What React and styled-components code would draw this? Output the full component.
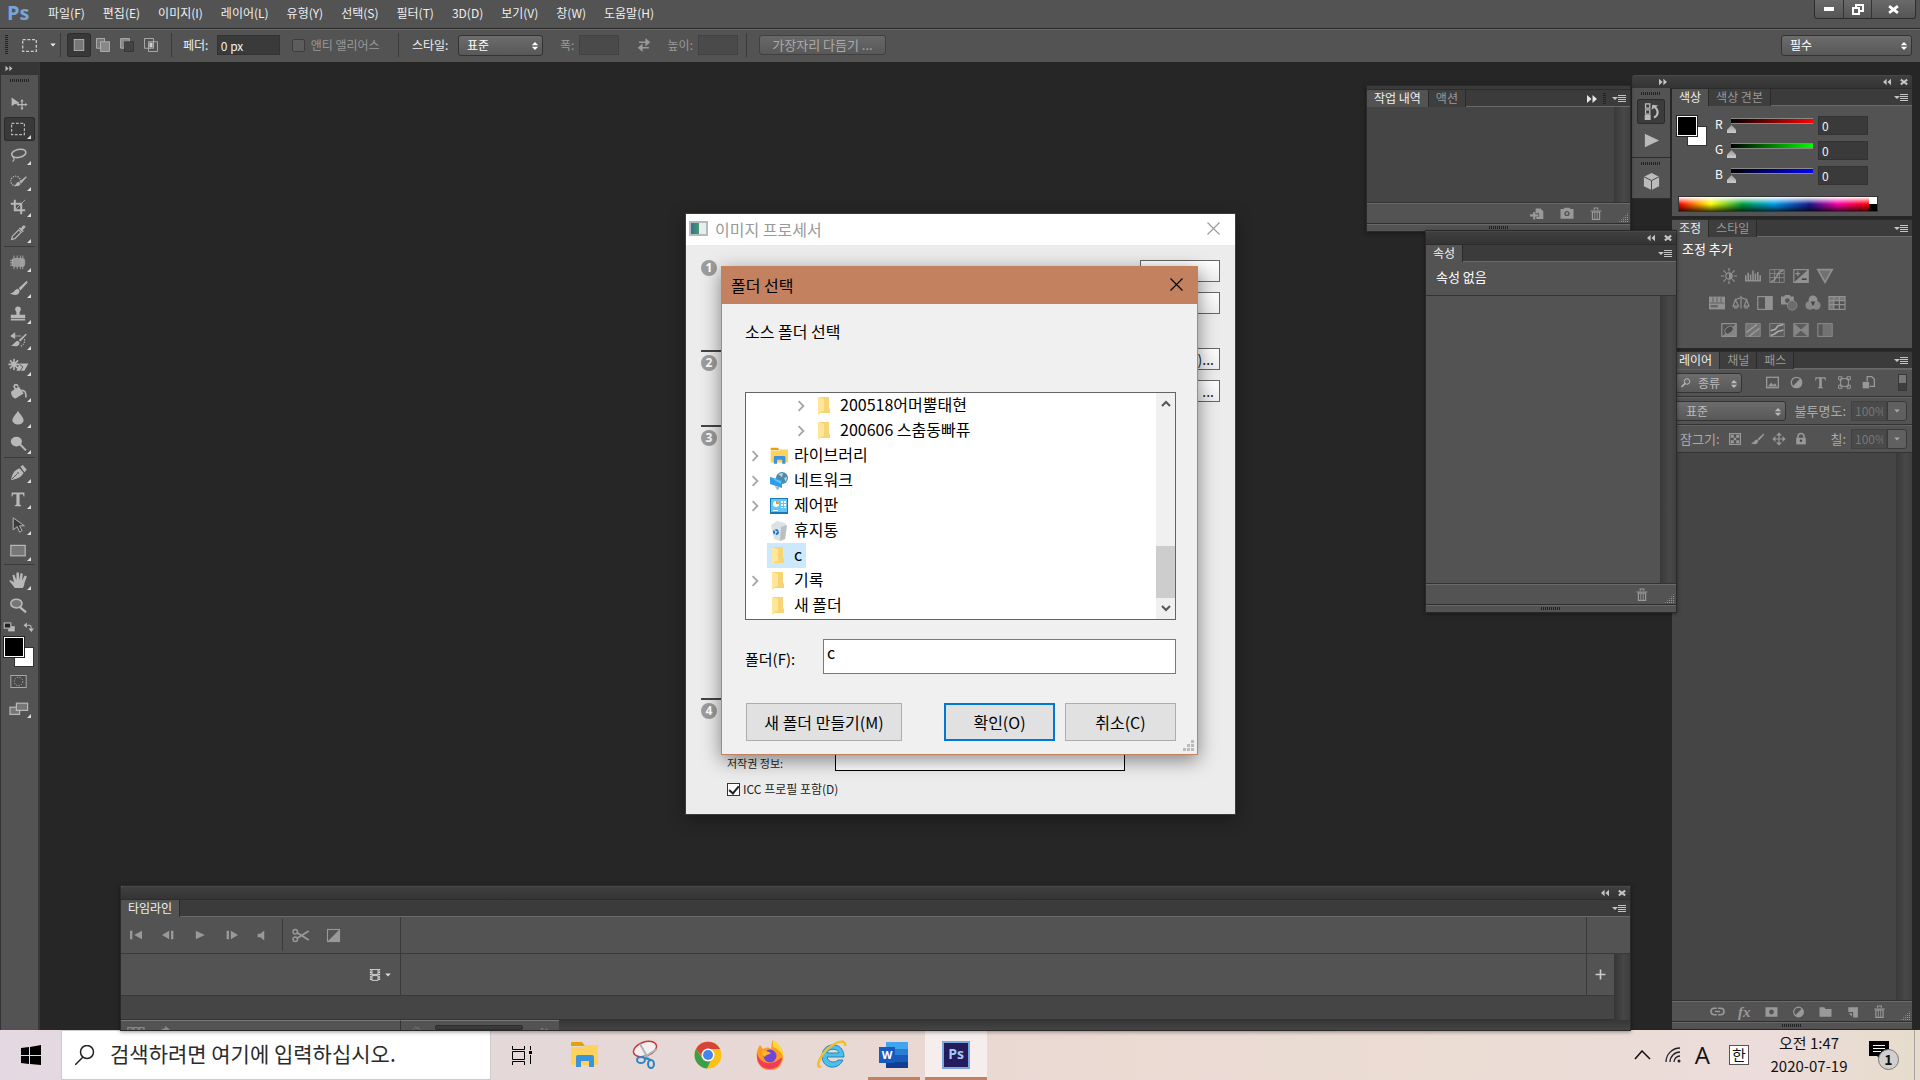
import React from 'react';
import styled, { createGlobalStyle, css } from 'styled-components';

const GlobalStyle = createGlobalStyle`
  * {
    box-sizing: border-box;
  }

  body {
    margin: 0;
    overflow: hidden;
    background: #262626;
    font-family: "Noto Sans CJK KR", "Noto Sans", sans-serif;
    font-size: 12px;
    line-height: 16px;
    color: #e6e6e6;
  }

  button, input, select {
    font: inherit;
    color: inherit;
    margin: 0;
    padding: 0;
    border: 0;
    border-radius: 0;
    background: none;
  }

  svg {
    display: block;
    flex: none;
  }
`;

/* ---------- icons ---------- */

const line = { fill: 'none', stroke: 'currentColor', strokeWidth: 1.5 };

const shapes = {
  move: <><path d="M2 3v11l3-2 7-2z" fill="currentColor" /><path d="M15 7v10M10 12h10" {...line} /><path d="M15 5l2 3h-4zM15 19l2-3h-4zM8 12l3-2v4zM22 12l-3-2v4z" fill="currentColor" /></>,
  marquee: <rect x="2" y="3" width="16" height="14" {...line} strokeDasharray="3.5 2" />,
  lasso: <><ellipse cx="11" cy="8" rx="9" ry="5" transform="rotate(-12 11 8)" {...line} strokeWidth="2" /><path d="M4 11c-2 2 2 3 1 5s-1 2-2 2" {...line} /></>,
  quick: <><circle cx="7" cy="10" r="6" {...line} strokeDasharray="1.5 1.5" /><path d="M20 4l-8 7 2 2 7-8zM11 11c-3 0-3 4-6 5 4 1 8 0 8-3z" fill="currentColor" /></>,
  crop: <><path d="M6 1v13h13M1 6h13v13" {...line} strokeWidth="2.5" /><path d="M7 13L19 1" {...line} strokeWidth="1" /></>,
  dropper: <><path d="M2 18l1-4 8-8 3 3-8 8z" {...line} /><path d="M11 4l5 5 1-1-1-2 3-3c1-2-1-3-3-2l-2 3-2-1z" fill="currentColor" /></>,
  heal: <><rect x="2" y="5" width="17" height="11" rx="4" fill="currentColor" opacity=".7" /><path d="M5 2v17M9 2v17M13 2v17M16 2v17M0 8h21M0 11h21M0 14h21" stroke="currentColor" strokeWidth="1" strokeDasharray="4 9" /></>,
  brush: <path d="M21 1l-10 9 2 3 9-10zM10 11c-4 0-4 5-10 6 6 3 12 2 12-4z" fill="currentColor" />,
  stamp: <><circle cx="10" cy="4" r="3.500" fill="currentColor" /><path d="M8 6h4v5h7v4H1v-4h7zM1 16h18v2H1z" fill="currentColor" /></>,
  history: <><path d="M2 5h12M1 5l5-4v7z" stroke="currentColor" fill="currentColor" /><path d="M20 2l-9 8 2 2 8-9zM10 11c-3 0-4 4-9 6 6 2 11 1 11-4z" fill="currentColor" /><path d="M18 9c1 4-1 7-5 9" {...line} strokeDasharray="1.5 1.5" /></>,
  eraser: <><path d="M5 1v14M-2 8h14M0 3l10 10M10 3L0 13" stroke="currentColor" strokeWidth="2" /><path d="M12 7h11l-5 9H8z" fill="currentColor" /><path d="M12 8l4 3-3 5" stroke="#444" fill="none" /></>,
  bucket: <><path d="M2 9l9-6 6 9-10 6c-4 0-7-7-5-9z" fill="currentColor" /><path d="M8 9L5 3c1-3 4-3 5 0M14 8c5 0 6 2 6 9" {...line} strokeWidth="2" /></>,
  drop: <path d="M10 1c2 4 7 8 7 12a7 5 0 01-14 0c0-4 5-8 7-12z" fill="currentColor" />,
  dodge: <><ellipse cx="8" cy="7" rx="7" ry="6" fill="currentColor" /><path d="M12 10l8 8" stroke="currentColor" strokeWidth="2.500" /></>,
  pen: <><path d="M1 19C3 12 4 7 12 4l5 6c-4 7-9 7-16 9zM13 2l3-2 5 6-3 3z" fill="currentColor" /><path d="M2 18l7-7" stroke="#444" /><circle cx="10" cy="10" r="1" fill="#444" /></>,
  type: <path d="M2 2h16v5h-1l-1-3h-4v13l2 1v1H6v-1l2-1V4H4L3 7H2z" fill="currentColor" />,
  path: <path d="M4 1v15l5-4 3 7 3-2-3-6h6z" fill="#3a3a3a" stroke="currentColor" strokeWidth="1.200" />,
  rect: <rect x="1" y="3" width="18" height="13" fill="#777" stroke="currentColor" strokeWidth="1.500" />,
  hand: <path d="M6 20c-2-3-5-6-7-9 1-2 4 0 6 2L3 4c1-1 3-1 3 1l2 5V1c1-1 3-1 3 0l1 9 1-8c1-1 3 0 3 1l-1 8 3-6c1-1 3 0 3 1l-3 8c0 3-1 4-2 6z" fill="currentColor" />,
  zoom: <><ellipse cx="8" cy="7" rx="7" ry="5.500" fill="#777" stroke="currentColor" strokeWidth="2" /><path d="M12 11l8 7" stroke="currentColor" strokeWidth="3" /></>,
  defaults: <><rect x="8" y="8" width="10" height="8" fill="#bbb" /><rect x="2" y="3" width="10" height="8" fill="#222" stroke="#aaa" strokeWidth="2" /></>,
  swap: <><path d="M6 6h6q3 0 3 7" {...line} strokeWidth="2" /><path d="M1 6l6-5v10zM10 12h10l-5 6z" fill="currentColor" /></>,
  mask: <><rect x="1" y="3" width="18" height="14" fill="#4a4a4a" stroke="currentColor" /><circle cx="10" cy="10" r="5" fill="none" stroke="currentColor" strokeDasharray="1.5 1.5" /></>,
  screens: <><rect x="0" y="9" width="12" height="9" fill="#777" stroke="currentColor" strokeWidth="1.500" /><rect x="8" y="4" width="14" height="9" fill="#777" stroke="currentColor" strokeWidth="1.500" /></>,
  selNew: <rect x="4" y="3" width="12" height="14" fill="#777" stroke="#bbb" />,
  selAdd: <><rect x="2" y="2" width="10" height="12" fill="#777" stroke="#bbb" /><rect x="7" y="6" width="11" height="12" fill="#888" stroke="#bbb" /></>,
  selSub: <><path d="M2 14V2h11v4H7v8z" fill="#888" stroke="#bbb" /><rect x="7" y="6" width="11" height="12" fill="#444" stroke="#333" /></>,
  selCross: <><rect x="2" y="2" width="11" height="12" fill="none" stroke="#bbb" /><rect x="7" y="6" width="11" height="12" fill="none" stroke="#bbb" /><rect x="8" y="7" width="4" height="6" fill="#ccc" /></>,
  arrows: <><path d="M3 6h11M17 14H6" {...line} strokeWidth="2" /><path d="M12 0l7 6-7 6zM8 8l-7 6 7 6z" fill="currentColor" /></>,
  play: <path d="M3 3l15 7-15 7z" fill="currentColor" />,
  historyPanel: <><path d="M3 1h5v5H3zM3 8h5v5H3z" {...line} /><path d="M2 14h7v6H2z" fill="currentColor" /><path d="M13 17c6-3 5-9 1-12" {...line} strokeWidth="2.500" /><path d="M10 8l1-6 7 1z" fill="currentColor" /></>,
  cube: <><path d="M10 1l8 4v10l-8 4-8-4V5z" fill="currentColor" /><path d="M2 5l8 4 8-4M10 9v10" stroke="#444" fill="none" /></>,
  sun: <><circle cx="10" cy="10" r="4" {...line} /><path d="M10 6a4 4 0 010 8z" fill="currentColor" /><path d="M10 0v4M10 16v4M0 10h4M16 10h4M3 3l3 3M14 14l3 3M17 3l-3 3M6 14l-3 3" {...line} /></>,
  levels: <path d="M1 17V9M4 17V6M7 17V8M10 17V3M13 17V7M16 17V5M19 17V9M0 16h20" {...line} strokeWidth="2" />,
  curves: <><path d="M1 2h18v16H1zM7 2v16M13 2v16M1 7h18M1 12h18" {...line} strokeWidth="1" /><path d="M2 17c9 0 6-13 16-14" {...line} strokeWidth="2" /></>,
  exposure: <><rect x="1" y="2" width="18" height="16" {...line} /><path d="M19 2v16H1z" fill="currentColor" /><path d="M3 7h6M6 4v6" {...line} /><path d="M11 14h6" stroke="#444" strokeWidth="2" /></>,
  vibrance: <path d="M1 2h18l-9 16z" fill="#717171" stroke="currentColor" strokeWidth="2" />,
  hue: <><path d="M0 2h20v16H0z" fill="currentColor" /><path d="M5 3v6M10 3v6M15 3v6M1 10h18" stroke="#535353" /><path d="M2 14h9" stroke="#666" strokeWidth="3" /></>,
  balance: <path d="M10 1v16M3 6l7-3 7 3M3 6l-3 8h7zM17 6l-3 8h6zM1 16h5M14 16h5" {...line} />,
  bw: <><rect x="1" y="2" width="18" height="16" {...line} /><path d="M10 2h9v16h-9z" fill="currentColor" /></>,
  photo: <><path d="M0 2h4l1-2h6l1 2h4v10H0z" fill="currentColor" /><circle cx="8" cy="7" r="3" fill="#555" /><circle cx="14" cy="13" r="6" fill="#6c6c6c" stroke="currentColor" /></>,
  mixer: <><circle cx="10" cy="6" r="5.500" fill="currentColor" /><circle cx="6" cy="13" r="5.500" fill="currentColor" opacity=".85" /><circle cx="14" cy="13" r="5.500" fill="currentColor" opacity=".85" /><path d="M7 8h6l-3 6z" fill="#444" /></>,
  lookup: <><rect x="0" y="2" width="20" height="16" {...line} /><path d="M0 2h6v16H0zM6 2h14v5H6z" fill="currentColor" opacity=".6" /><path d="M6 2v16M13 2v16M0 7h20M0 12h20" {...line} /></>,
  invert: <><rect x="1" y="2" width="18" height="16" {...line} /><path d="M19 2v16H1z" fill="currentColor" opacity=".8" /><ellipse cx="10" cy="10" rx="6" ry="4" transform="rotate(-40 10 10)" fill="#4b4b4b" stroke="currentColor" /></>,
  poster: <><rect x="1" y="2" width="18" height="16" fill="#737373" stroke="currentColor" /><path d="M2 13L15 3M5 18L18 8" stroke="#999" strokeWidth="2" /></>,
  threshold: <><rect x="1" y="2" width="18" height="16" fill="#5c5c5c" stroke="currentColor" /><path d="M2 11l6-2 3-4 7-2M2 17l5-2 4-3 7-2" stroke="#aaa" strokeWidth="2" fill="none" /></>,
  selective: <><rect x="1" y="2" width="18" height="16" fill="#5c5c5c" stroke="currentColor" /><path d="M1 2l9 8 9-8M1 18l9-8 9 8" stroke="currentColor" fill="none" /><path d="M1 2l9 8-9 8zM19 2l-9 8 9 8z" fill="#858585" /></>,
  gradientMap: <><rect x="1" y="2" width="18" height="16" fill="#727272" stroke="currentColor" /><path d="M2 3h5v14H2z" fill="#565656" /></>,
  search: <><circle cx="12" cy="7" r="5.500" {...line} strokeWidth="2" /><path d="M8 11l-7 7" {...line} strokeWidth="3" /></>,
  image: <><rect x="1" y="2" width="18" height="16" {...line} strokeWidth="2" /><path d="M3 16l5-6 3 4 3-3 3 5z" fill="currentColor" /></>,
  adjust: <><circle cx="10" cy="10" r="8" {...line} strokeWidth="2" /><path d="M4 16L16 4a8 8 0 01-12 12z" fill="currentColor" /></>,
  shape: <><path d="M4 4h12v12H4z" {...line} /><path d="M1 1h5v5H1zM14 1h5v5h-5zM1 14h5v5H1zM14 14h5v5h-5z" {...line} /></>,
  smart: <><path d="M8 8V1h7l4 4v11h-7" {...line} strokeWidth="2" /><path d="M1 9h10v10H1z" fill="currentColor" /></>,
  checker: <><rect x="1" y="1" width="18" height="18" {...line} strokeWidth="2" /><path d="M3 3h5v5H3zM12 3h5v5h-5zM8 8h4v4H8zM3 12h5v5H3zM12 12h5v5h-5z" fill="currentColor" /></>,
  cross: <><path d="M10 3v14M3 10h14" {...line} strokeWidth="2" /><path d="M10-1l5 5H5zM10 21l5-5H5zM-1 10l5-5v10zM21 10l-5-5v10z" fill="currentColor" /></>,
  lock: <><path d="M2 8h16v11H2z" fill="currentColor" /><path d="M5 9V6a5 5 0 0110 0v3" {...line} strokeWidth="2.500" /><circle cx="10" cy="13" r="2" fill="#444" /></>,
  link: <path d="M9 5H5a5 5 0 000 10h4M11 5h4a5 5 0 010 10h-4M6 10h8" {...line} strokeWidth="2.500" />,
  maskAdd: <path fillRule="evenodd" d="M0 2h20v16H0zM10 6a4 4 0 100 8 4 4 0 000-8z" fill="currentColor" />,
  folder: <path d="M0 2h8l2 3h10v13H0z" fill="currentColor" />,
  newLayer: <path d="M3 2h16v17H11v-9H3zM4 12h5v6z" fill="currentColor" />,
  trash: <><path d="M7 3V0h6v3M1 5h18" {...line} strokeWidth="2" /><path d="M4 7h12v12H4z" {...line} strokeWidth="2" /><path d="M8 8v10M12 8v10" {...line} /></>,
  newDoc: <><path d="M8 2h7l4 4v11H9v-3h4V9H8z" fill="currentColor" /><path d="M6 7v11M0 12h12" stroke="currentColor" strokeWidth="3" /></>,
  camera: <path fillRule="evenodd" d="M0 3h5l1-2h8l1 2h5v15H0zM10 6a4 4 0 100 8 4 4 0 000-8zM10 8a2 2 0 110 4 2 2 0 010-4z" fill="currentColor" />,
  first: <path d="M0 3h4v14H0zM20 3v14L7 10z" fill="currentColor" />,
  prev: <path d="M0 10l12-7v14zM15 3h4v14h-4z" fill="currentColor" />,
  next: <path d="M1 3h4v14H1zM8 3l12 7-12 7z" fill="currentColor" />,
  sound: <path d="M3 7h5l7-6v18l-7-6H3z" fill="currentColor" />,
  scissors: <><circle cx="3" cy="5" r="3" {...line} strokeWidth="2" /><circle cx="3" cy="15" r="3" {...line} strokeWidth="2" /><path d="M5 6l16 10M5 14L21 4" {...line} strokeWidth="2.500" /></>,
  transition: <><rect x="2" y="2" width="16" height="16" {...line} /><path d="M18 2v16H2z" fill="currentColor" /></>,
  film: <><path d="M3 0v20M17 0v20" {...line} strokeWidth="3" strokeDasharray="2.500 1.500" /><path d="M5 1h10v8H5zM5 11h10v8H5z" {...line} /></>,
  plus: <path d="M10 1v18M1 10h18" {...line} strokeWidth="3" />,
  frames: <path d="M1 3h5v8H1zM8 3h5v8H8zM15 3h5v8h-5z" {...line} />,
  share: <path d="M11 1l8 7-8 6v-4c-5 0-7 3-9 7 0-8 4-12 9-12z" fill="currentColor" />,
  mountain: <path d="M0 15L7 5l4 6 3-5 6 9" {...line} />,
  close: <path d="M2 2l16 16M18 2L2 18" stroke="currentColor" fill="none" strokeWidth="1.500" />,
  closeBold: <path d="M2 4l16 12M18 4L2 16" stroke="currentColor" strokeWidth="5" />,
  rewind: <path d="M9 2v16L0 10zM20 2v16l-9-8z" fill="currentColor" />,
  forward: <path d="M0 2l9 8-9 8zM11 2l9 8-9 8z" fill="currentColor" />,
  caret: <path d="M1 5h18l-9 10z" fill="currentColor" />,
  updown: <path d="M10 0l8 8H2zM10 20l8-8H2z" fill="currentColor" />,
  chevron: <path d="M6 2l8 8-8 8" {...line} strokeWidth="3" />,
  chevronUp: <path d="M2 14l8-8 8 8" {...line} strokeWidth="4" />,
  chevronDown: <path d="M2 6l8 8 8-8" {...line} strokeWidth="4" />,
};

const Icon = ({ name, w = 18, h = w }) => (
  <svg width={w} height={h} viewBox="0 0 20 20" overflow="visible" aria-hidden="true">
    {shapes[name]}
  </svg>
);

const MenuGlyph = () => (
  <svg width="14" height="10" viewBox="0 0 14 10" aria-hidden="true">
    <path d="M0 3h6L3 6zM6 1h8v1H6zM6 3h8v1H6zM6 5h8v1H6zM6 7h8v1H6z" fill="#c4c4c4" />
  </svg>
);

/* ---------- shared parts ---------- */

const Screen = styled.div`
  display: flex;
  flex-direction: column;
  height: 100vh;
`;

const Row = styled.div`
  display: flex;
  align-items: ${p => p.$align || 'center'};
  gap: ${p => p.$gap || 0}px;
`;

const Spacer = styled.div`
  flex: 1;
`;

const Grip = styled.div`
  width: 20px;
  height: ${p => p.$h || 3}px;
  background: repeating-linear-gradient(90deg, #222 0 1px, transparent 1px 2px);
`;

const CornerGrip = styled.div`
  width: 10px;
  height: 10px;
  align-self: flex-end;
  background: conic-gradient(#999 25%, transparent 0) 0 0 / 2px 2px;
  clip-path: polygon(100% 0, 100% 100%, 0 100%);
`;

const IconButton = styled.button`
  display: flex;
  align-items: center;
  justify-content: center;
  width: ${p => p.$w || 24}px;
  height: ${p => p.$h || 20}px;
  color: ${p => p.$color || '#999'};
`;

/* ---------- menu bar ---------- */

const MenuBar = styled.header`
  display: flex;
  flex: none;
  height: 29px;
  padding-left: 7px;
  background: #535353;
  border-bottom: 1px solid #282828;
`;

const Logo = styled.div`
  width: 31px;
  color: #77a5d8;
  font: bold 20px/25px "Open Sans", sans-serif;
`;

const Menus = styled.nav`
  display: flex;
  gap: 18px;
  padding: 5px 0 0 10px;
`;

const MenuItem = styled.button`
  height: 16px;
  color: #f0f0f0;
  white-space: nowrap;
`;

const WindowButtons = styled.div`
  display: flex;
  height: 19px;
  margin-right: 4px;
  border: 1px solid #2d2d2d;
  border-top: 0;
  border-radius: 0 0 3px 3px;
  background: linear-gradient(#6a6a6a, #555);

  button {
    display: flex;
    align-items: center;
    justify-content: center;
    width: 28px;
    color: #fff;
  }

  button + button {
    border-left: 1px solid #333;
  }

  button:last-child {
    width: 44px;
  }
`;

const menuNames = ['파일(F)', '편집(E)', '이미지(I)', '레이어(L)', '유형(Y)', '선택(S)', '필터(T)', '3D(D)', '보기(V)', '창(W)', '도움말(H)'];

/* ---------- options bar ---------- */

const OptionsBar = styled.div`
  display: flex;
  flex: none;
  align-items: center;
  height: 33px;
  padding: 0 8px 2px 5px;
  background: #535353;
  border-top: 1px solid #6a6a6a;
`;

const OptionGroup = styled.div`
  display: flex;
  align-items: center;
  gap: ${p => p.$gap}px;
  width: ${p => p.$w}px;
  height: 24px;
  padding-left: ${p => p.$pad || 0}px;
  padding-right: ${p => p.$end || 0}px;
  border-right: 1px solid #3a3a3a;
  white-space: nowrap;
  color: ${p => (p.$dim ? '#999' : '#eee')};
`;

const SideGrip = styled.div`
  width: 3px;
  height: ${p => p.$h || 20}px;
  background: repeating-linear-gradient(#222 0 1px, transparent 1px 2px);
`;

const ModeButton = styled.button`
  display: flex;
  align-items: center;
  justify-content: center;
  width: 22px;
  height: 22px;
  border-radius: 2px;
  color: #bbb;
  ${p => p.$on && css`
    background: #383838;
    box-shadow: 0 0 0 1px #2d2d2d;
  `}
`;

const Field = styled.input`
  width: ${p => p.$w}px;
  height: ${p => p.$h || 20}px;
  padding: 0 3px;
  border: 1px solid #333;
  background: #3a3a3a;
  color: #f2f2f2;

  &:disabled {
    background: #4a4a4a;
    border-color: #424242;
    color: #777;
  }
`;

const DarkCheck = styled.input`
  appearance: none;
  width: 13px;
  height: 13px;
  border: 1px solid #3c3c3c;
  border-radius: 2px;
  background: #5d5d5d;
`;

const SelectBox = styled.div`
  position: relative;
  width: ${p => p.$w}px;
  color: ${p => (p.$dim ? '#bbb' : '#fff')};

  select {
    appearance: none;
    width: 100%;
    height: ${p => p.$h || 21}px;
    padding-left: ${p => p.$pad || 8}px;
    border: 1px solid #333;
    border-radius: 3px;
    background: linear-gradient(#6c6c6c, #585858);
    line-height: 16px;
  }

  svg {
    position: absolute;
    right: 4px;
    top: 6px;
    pointer-events: none;
  }

  svg:nth-of-type(2) {
    right: auto;
    left: 6px;
    top: 5px;
  }
`;

const Select = ({ label, value, glass, ...rest }) => (
  <SelectBox {...rest}>
    <select aria-label={label} defaultValue={value}>
      <option>{value}</option>
    </select>
    <Icon name="updown" w={8} h={10} />
    {glass && <Icon name="search" w={10} />}
  </SelectBox>
);

const RefineButton = styled.button`
  width: 127px;
  height: 20px;
  margin-left: 12px;
  border: 1px solid #404040;
  border-radius: 3px;
  background: linear-gradient(#686868, #585858);
  color: #aaa;
  font-size: 13px;
  line-height: 16px;
`;

/* ---------- work area ---------- */

const Workspace = styled.main`
  position: relative;
  display: flex;
  flex: 1;
  min-height: 0;
  background: #262626;
`;

const Toolbox = styled.aside`
  display: flex;
  flex-direction: column;
  align-items: center;
  width: 40px;
  background: #535353;
  border-left: 1px solid #333;
  border-right: 2px solid #383838;
`;

const ToolHead = styled.div`
  align-self: stretch;
  height: 13px;
  padding: 3px 4px;
  margin-bottom: 4px;
  background: #363636;
  color: #bbb;
`;

const ToolGroups = styled.div`
  display: flex;
  flex-direction: column;
  gap: 2px;
  padding: 8px 0 1px;
`;

const ToolGroup = styled.div`
  display: flex;
  flex-direction: column;
  gap: 2px;
  padding: 1px 0;
  border-bottom: ${p => (p.$last ? 0 : 1)}px solid #3a3a3a;
`;

const Tool = styled.button`
  position: relative;
  display: flex;
  align-items: center;
  justify-content: center;
  width: 31px;
  height: 24px;
  padding-right: 3px;
  color: #b8b8b8;
  border-radius: 3px;
  ${p => p.$on && css`
    background: #393939;
    box-shadow: inset 0 0 0 1px #2b2b2b;
  `}

  &::after {
    content: "";
    position: absolute;
    right: 4px;
    bottom: 2px;
    border: 2px solid transparent;
    border-right-color: #ddd;
    border-bottom-color: #ddd;
    display: ${p => (p.$flat ? 'none' : 'block')};
  }
`;

const Swatches = styled.div`
  display: grid;
  grid-template: repeat(3, 10px) / repeat(3, 10px);

  i {
    border: 1px solid #333;
    background: #fff;
    grid-area: 2 / 2 / 4 / 4;
  }

  b {
    z-index: 1;
    grid-area: 1 / 1 / 3 / 3;
    background: #000;
    border: 1px solid #fff;
    outline: 1px solid #222;
  }
`;

const SwatchGap = styled.div`
  padding: 3px 2px 2px 0;
`;

const ToolSpace = styled.div`
  height: 3px;
`;

const toolGroups = [
  ['move', 'marquee', 'lasso', 'quick', 'crop', 'dropper'],
  ['heal', 'brush', 'stamp', 'history', 'eraser', 'bucket', 'drop', 'dodge'],
  ['pen', 'type', 'path', 'rect'],
  ['hand', 'zoom'],
];

const Toolbar = () => (
  <Toolbox>
    <ToolHead><Icon name="forward" w={8} h={7} /></ToolHead>
    <Grip />
    <ToolGroups>
      {toolGroups.map((group, i) => (
        <ToolGroup key={i} $last={i === 3}>
          {group.map(name => (
            <Tool key={name} aria-label={name} $on={name === 'marquee'} $flat={name === 'move' || name === 'zoom'}>
              <Icon name={name} w={16} />
            </Tool>
          ))}
        </ToolGroup>
      ))}
    </ToolGroups>
    <Row $gap={4}>
      <IconButton $w={14} $h={14} aria-label="defaults"><Icon name="defaults" w={13} /></IconButton>
      <IconButton $w={16} $h={14} $color="#bbb" aria-label="swap"><Icon name="swap" w={11} /></IconButton>
    </Row>
    <SwatchGap><Swatches><b /><i /></Swatches></SwatchGap>
    <Tool $flat aria-label="quick mask"><Icon name="mask" w={17} /></Tool>
    <ToolSpace />
    <Tool aria-label="screen mode"><Icon name="screens" w={16} /></Tool>
  </Toolbox>
);

/* ---------- panels ---------- */

const Floating = styled.section`
  position: absolute;
  display: flex;
  flex-direction: column;
  background: #535353;
  box-shadow: 0 0 0 1px #2a2a2a, 0 1px 4px 1px rgba(0, 0, 0, 0.4);
`;

const HistoryWindow = styled(Floating)`
  top: 24px;
  right: 290px;
  width: 263px;
`;

const PropertiesWindow = styled(Floating)`
  top: 169px;
  right: 244px;
  width: 250px;
  z-index: 2;
`;

const TimelineWindow = styled(Floating)`
  left: 121px;
  right: 290px;
  bottom: 0;
`;

const HeadBar = styled.div`
  display: flex;
  align-items: center;
  gap: 9px;
  height: 13px;
  padding: 0 4px;
  background: linear-gradient(#3f3f3f, #343434);
  border-top: 1px solid #484848;
  border-radius: 3px 3px 0 0;
  color: #c4c4c4;
`;

const TabBar = styled.div`
  display: flex;
  align-items: center;
  gap: 6px;
  height: 18px;
  padding-right: 4px;
  background: #3b3b3b;
  border-top: 1px solid #2c2c2c;
  box-shadow: inset 0 -1px #6a6a6a;
`;

const Tabs = styled.div`
  display: flex;
  height: 17px;
`;

const Tab = styled.button`
  height: 17px;
  padding: 0 7px 2px;
  line-height: 14px;
  white-space: nowrap;
  color: ${p => (p.$on ? '#f0f0f0' : '#999')};
  background: ${p => (p.$on ? '#535353' : '#3e3e3e')};
  border-right: 1px solid #2a2a2a;
`;

const TabStrip = ({ names, collapse }) => (
  <TabBar>
    <Tabs role="tablist">
      {names.map((name, i) => (
        <Tab key={name} $on={i === 0} role="tab" aria-selected={i === 0}>{name}</Tab>
      ))}
    </Tabs>
    <Spacer />
    {collapse && <Icon name="forward" w={10} />}
    {collapse && <SideGrip $h={12} />}
    <MenuGlyph />
  </TabBar>
);

const WindowHead = () => (
  <HeadBar>
    <Spacer />
    <Icon name="rewind" w={8} />
    <Icon name="closeBold" w={8} />
  </HeadBar>
);

const Well = styled.div`
  display: flex;
  flex: ${p => (p.$h ? 'none' : 1)};
  height: ${p => (p.$h ? `${p.$h}px` : 'auto')};
  justify-content: flex-end;
  background: ${p => p.$bg || '#454545'};

  &::after {
    content: "";
    width: 16px;
    background: linear-gradient(90deg, #393939, #484848 60%, #404040);
  }
`;

const PanelFoot = styled.div`
  display: flex;
  align-items: center;
  justify-content: flex-end;
  gap: ${p => p.$gap || 16}px;
  height: 20px;
  padding: 0 2px;
  border-top: 1px solid #6a6a6a;
  box-shadow: 0 -1px #333;
  color: #999;
  background: #535353;
`;

const BottomStrip = styled.div`
  display: flex;
  align-items: center;
  justify-content: center;
  height: 8px;
  background: #535353;
  border-top: 1px solid #2e2e2e;
  box-shadow: inset 0 1px #686868;
`;

const TopStrip = styled.div`
  height: 3px;
  background: #3b3b3b;
`;

const Message = styled.div`
  height: 34px;
  padding: 7px 10px;
  border-bottom: 1px solid #333;
  color: #fff;
  font-size: 13px;
`;

/* ---------- right dock ---------- */

const Dock = styled.aside`
  display: flex;
  flex-direction: column;
  width: 280px;
  margin: 13px 8px 1px 0;
`;

const DockHead = styled(HeadBar)`
  padding-left: 27px;
`;

const DockColumns = styled.div`
  display: flex;
  flex: 1;
  align-items: flex-start;
  gap: 2px;
  min-height: 0;
`;

const IconColumn = styled.div`
  width: 38px;
  background: #535353;

  > div {
    display: flex;
    flex-direction: column;
    align-items: center;
    gap: 4px;
    padding: 4px 0;
    border-bottom: 1px solid #2d2d2d;
  }
`;

const DockButton = styled.button`
  display: flex;
  align-items: center;
  justify-content: center;
  width: 28px;
  height: 25px;
  border-radius: 3px;
  color: #bbb;
  ${p => p.$on && css`
    background: #3c3c3c;
    box-shadow: inset 0 0 0 1px #2b2b2b;
  `}
`;

const Panels = styled.div`
  display: flex;
  flex: 1;
  flex-direction: column;
  align-self: stretch;
  gap: 3px;
`;

const Panel = styled.section`
  display: flex;
  flex-direction: column;
  flex: ${p => (p.$grow ? 1 : 'none')};
  background: #535353;
`;

const ColorBody = styled.div`
  display: flex;
  gap: 8px;
  padding: 10px 0 0 5px;
`;

const Channels = styled.div`
  display: flex;
  flex-direction: column;
  gap: 5px;
`;

const Channel = styled.label`
  display: flex;
  height: 20px;

  span {
    width: 13px;
    line-height: 15px;
    color: #fff;
  }

  input:last-child {
    height: 19px;
    margin-left: 2px;
    padding-bottom: 1px;
  }
`;

const ColorRange = styled.input`
  appearance: none;
  width: 88px;
  height: 20px;
  padding: 0 2px;

  &::-webkit-slider-runnable-track {
    height: 20px;
    margin: 0 1px;
    background: linear-gradient(#888, #888) 0 2px / 100% 1px no-repeat,
      linear-gradient(#888, #888) 0 7px / 100% 1px no-repeat,
      linear-gradient(90deg, #000, ${p => p.$c}) 0 2px / 100% 6px no-repeat;
  }

  &::-webkit-slider-thumb {
    appearance: none;
    width: 9px;
    height: 8px;
    margin: 9px 0 0 -4px;
    background: linear-gradient(#999, #ccc);
    clip-path: polygon(50% 0, 100% 60%, 100% 100%, 0 100%, 0 60%);
  }
`;

const Spectrum = styled.div`
  display: flex;
  justify-content: flex-end;
  width: 200px;
  height: 16px;
  margin: 10px 0 4px 6px;
  border: 1px solid #333;
  background: linear-gradient(#fff, transparent 50%, #000 120%),
    linear-gradient(90deg, #f00, #ff0 16%, #00a040 32%, #00a0f0 48%, #1a1a90 66%, #f0a 80%, #f00 96%);

  &::after {
    content: "";
    width: 8px;
    background: linear-gradient(#fff 50%, #000 50%);
  }
`;

const AdjustBody = styled.div`
  display: flex;
  flex-direction: column;
  height: 111px;
  padding: 4px 0 0 10px;
  color: #fff;
  font-size: 13px;
`;

const AdjustGrid = styled.div`
  display: flex;
  flex-direction: column;
  align-items: center;
  width: 190px;
  padding-top: 9px;
  gap: 7px;
  color: #919191;
`;

const LayerRow = styled.div`
  display: flex;
  align-items: center;
  height: 28px;
  padding: 0 5px 0 ${p => p.$pad || 3}px;
  border-bottom: 1px solid #333;
  box-shadow: inset 0 1px #626262;
  color: #aaa;
  white-space: nowrap;

  label, span {
    font-size: 13px;
  }
`;

const Toggle = styled.button`
  width: 9px;
  height: 17px;
  background: linear-gradient(#777 50%, #3e3e3e 50%);
  border: 1px solid #383838;
`;

const LockIcons = styled.div`
  display: flex;
  margin-left: 4px;
`;

const Percent = styled.div`
  display: flex;
  margin-left: 5px;

  button {
    display: flex;
    align-items: center;
    justify-content: center;
    width: 20px;
    height: 20px;
    border: 1px solid #3a3a3a;
    border-radius: 0 3px 3px 0;
    background: #606060;
  }
`;

const Opacity = ({ label }) => (
  <>
    <label htmlFor={label}>{label}:</label>
    <Percent>
      <Field id={label} $w={36} disabled defaultValue="100%" />
      <button aria-label={`${label} 목록`}><Icon name="caret" w={6} /></button>
    </Percent>
  </>
);

const adjustRows = [
  ['sun', 'levels', 'curves', 'exposure', 'vibrance'],
  ['hue', 'balance', 'bw', 'photo', 'mixer', 'lookup'],
  ['invert', 'poster', 'threshold', 'selective', 'gradientMap'],
];

const channels = [['R', '#f00'], ['G', '#0f0'], ['B', '#00f']];

const Fx = styled.span`
  width: 13px;
  font: italic bold 15px/16px "Liberation Serif", serif;
`;

const RightDock = () => (
  <Dock>
    <DockHead>
      <Icon name="forward" w={8} />
      <Spacer />
      <Icon name="rewind" w={8} />
      <Icon name="closeBold" w={8} />
    </DockHead>
    <DockColumns>
      <IconColumn>
        <div>
          <Grip />
          <DockButton $on aria-label="작업 내역"><Icon name="historyPanel" w={17} /></DockButton>
          <DockButton aria-label="액션"><Icon name="play" w={19} /></DockButton>
        </div>
        <div>
          <Grip />
          <DockButton aria-label="3D"><Icon name="cube" w={19} /></DockButton>
        </div>
      </IconColumn>
      <Panels>
        <Panel>
          <TabStrip names={['색상', '색상 견본']} />
          <ColorBody>
            <Swatches><b /><i /></Swatches>
            <Channels>
              {channels.map(([name, color]) => (
                <Channel key={name}>
                  <span>{name}</span>
                  <ColorRange type="range" min="0" max="255" defaultValue="0" $c={color} aria-label={name} />
                  <Field $w={50} defaultValue="0" aria-label={`${name} 값`} />
                </Channel>
              ))}
            </Channels>
          </ColorBody>
          <Spectrum />
        </Panel>
        <Panel>
          <TabStrip names={['조정', '스타일']} />
          <AdjustBody>
            조정 추가
            <AdjustGrid>
              {adjustRows.map((icons, i) => (
                <Row key={i}>
                  {icons.map(name => (
                    <IconButton key={name} $color="#919191" aria-label={name}><Icon name={name} w={16} /></IconButton>
                  ))}
                </Row>
              ))}
            </AdjustGrid>
          </AdjustBody>
        </Panel>
        <Panel $grow>
          <TabStrip names={['레이어', '채널', '패스']} />
          <LayerRow>
            <Select label="종류" value="종류" $w={67} $h={20} $pad={22} $dim glass />
            <Spacer />
            {['image', 'adjust', 'type', 'shape', 'smart'].map(name => (
              <IconButton key={name} aria-label={name}><Icon name={name} w={13} /></IconButton>
            ))}
            <Spacer />
            <Toggle aria-label="필터링" />
          </LayerRow>
          <LayerRow>
            <Select label="혼합 모드" value="표준" $w={111} $h={20} $pad={10} $dim />
            <Spacer />
            <Opacity label="불투명도" />
          </LayerRow>
          <LayerRow $pad={8}>
            <span>잠그기:</span>
            <LockIcons>
              {['checker', 'brush', 'cross', 'lock'].map(name => (
                <IconButton key={name} $w={22} aria-label={name}><Icon name={name} w={12} /></IconButton>
              ))}
            </LockIcons>
            <Spacer />
            <Opacity label="칠" />
          </LayerRow>
          <Well />
          <PanelFoot $gap={14}>
            <Icon name="link" w={13} />
            <Fx>fx</Fx>
            {['maskAdd', 'adjust', 'folder', 'newLayer', 'trash'].map(name => <Icon key={name} name={name} w={13} h={12} />)}
            <CornerGrip />
          </PanelFoot>
          <BottomStrip><Grip /></BottomStrip>
        </Panel>
      </Panels>
    </DockColumns>
  </Dock>
);

/* ---------- timeline ---------- */

const Track = styled.div`
  display: grid;
  grid-template-columns: 279px 1fr ${p => p.$right || '44px'};
  height: ${p => p.$h}px;
  border-bottom: 1px solid #393939;
  background: #535353;

  > div {
    display: flex;
    align-items: center;
  }

  > div + div {
    border-left: 1px solid #393939;
  }
`;

const Controls = styled.div`
  gap: 8px;
  padding-left: 3px;
`;

const Rule = styled.div`
  width: 1px;
  height: 32px;
  margin-left: 4px;
  background: #3a3a3a;
`;

const TimeRows = styled.div`
  flex: 1;
`;

const ClipCell = styled.div`
  justify-content: flex-end;
  gap: 4px;
  padding-right: 9px;
  color: #ddd;
`;

const AddCell = styled.div`
  justify-content: center;
  color: #ccc;
`;

const EmptyTrack = styled.div`
  height: 24px;
  background: #454545;
  border-bottom: 1px solid #333;
`;

const Cut = styled.div`
  display: flex;
  height: 10px;
  overflow: hidden;
  background: linear-gradient(#363636, #444);
  color: #888;

  > div {
    display: flex;
    flex: none;
    gap: 14px;
    padding: 4px 6px 0;
    background: #535353;
    border-top: 1px solid #777;
    width: 279px;
  }

  > div + div {
    width: 159px;
    gap: 15px;
    border-left: 1px solid #333;
    padding-left: 12px;
  }
`;

const ZoomTrack = styled.span`
  width: 88px;
  height: 5px;
  border: 1px solid #2d2d2d;
  border-radius: 2px;
  background: #3a3a3a;
`;

const TimeScroll = styled.div`
  width: 16px;
  background: linear-gradient(90deg, #363636, #464646 60%, #3e3e3e);
`;

const Timeline = () => (
  <TimelineWindow>
    <WindowHead />
    <TabStrip names={['타임라인']} />
    <Track $h={37}>
      <Controls>
        {['first', 'prev', 'play', 'next'].map(name => (
          <IconButton key={name} aria-label={name}><Icon name={name} w={12} /></IconButton>
        ))}
        <IconButton $w={18} aria-label="sound"><Icon name="sound" w={11} /></IconButton>
        <Rule />
        <IconButton $w={18} aria-label="분할"><Icon name="scissors" w={15} /></IconButton>
        <IconButton $w={32} aria-label="전환"><Icon name="transition" w={15} /></IconButton>
      </Controls>
      <div />
      <div />
    </Track>
    <Row $align="stretch">
      <TimeRows>
        <Track $h={42} $right="28px">
          <ClipCell><Icon name="film" w={12} /><Icon name="caret" w={6} /></ClipCell>
          <div />
          <AddCell><Icon name="plus" w={11} /></AddCell>
        </Track>
        <EmptyTrack />
      </TimeRows>
      <TimeScroll />
    </Row>
    <Cut>
      <div><Icon name="frames" w={17} /><Icon name="share" w={13} /></div>
      <div><Icon name="mountain" w={7} /><ZoomTrack /><Icon name="mountain" w={12} /></div>
    </Cut>
  </TimelineWindow>
);

/* ---------- image processor ---------- */

const Processor = styled.section`
  position: absolute;
  top: 152px;
  left: 50%;
  width: 549px;
  margin-left: -274px;
  background: #ececec;
  color: #222;
  box-shadow: 0 0 0 1px #3c3c3c, 0 4px 16px rgba(0, 0, 0, 0.4);
`;

const ProcessorTitle = styled.div`
  display: flex;
  align-items: center;
  gap: 7px;
  height: 31px;
  padding: 0 15px 2px 3px;
  background: #fff;
  color: #999;
  font-size: 16px;
`;

const AppGlyph = styled.div`
  width: 19px;
  height: 15px;
  border: 2px solid #b4bcc0;
  background: linear-gradient(90deg, #3c6f90, #3f9a70 50%, #e8eef0 50%);
`;

const Step = styled.div`
  display: flex;
  justify-content: space-between;
  height: ${p => p.$h}px;
  margin: 0 15px;
  padding-top: ${p => (p.$first ? 15 : 0)}px;
`;

const StepSide = styled.div`
  display: flex;
  width: 430px;
  margin-top: 2px;
  padding-top: 3px;
  border-top: 2px solid #444;
`;

const StepNumber = styled.span`
  flex: none;
  width: 16px;
  height: 16px;
  border-radius: 8px;
  background: #9c9c9c;
  color: #fff;
  text-align: center;
  font: bold 12px/16px "Open Sans", sans-serif;
`;

const StepButtons = styled.div`
  display: flex;
  flex-direction: column;
  gap: 10px;

  button {
    width: 80px;
    height: 22px;
    padding-right: 5px;
    border: 1px solid #666;
    background: linear-gradient(#fff, #eee);
    text-align: right;
    font-size: 14px;
    line-height: 16px;
  }
`;

const StepFour = styled.div`
  flex: 1;
  padding: 42px 0 0 10px;
`;

const Copyright = styled.label`
  display: flex;
  align-items: flex-end;
  justify-content: space-between;
  width: 398px;
  height: 26px;
  font-size: 11px;
  line-height: 16px;

  input {
    width: 290px;
    height: 26px;
    border: 1px solid #000;
    background: #fff;
  }
`;

const IccLabel = styled.label`
  display: flex;
  align-items: center;
  gap: 3px;
  margin-top: 10px;

  input {
    appearance: none;
    display: grid;
    place-items: center;
    width: 13px;
    height: 13px;
    border: 1px solid #333;
    background: #fff;
  }

  input:checked::after {
    content: "";
    width: 4px;
    height: 8px;
    margin-bottom: 2px;
    border: solid #222;
    border-width: 0 2px 2px 0;
    transform: rotate(40deg);
  }
`;

const ImageProcessor = () => (
  <Processor role="dialog" aria-label="이미지 프로세서">
    <ProcessorTitle>
      <AppGlyph />
      이미지 프로세서
      <Spacer />
      <IconButton $w={13} aria-label="닫기"><Icon name="close" w={15} /></IconButton>
    </ProcessorTitle>
    <Step $first $h={103}>
      <StepNumber>1</StepNumber>
      <StepButtons><button aria-label="열기" /><button aria-label="찾기" /></StepButtons>
    </Step>
    <Step $h={75}>
      <StepSide><StepNumber>2</StepNumber></StepSide>
      <StepButtons><button>)...</button><button>...</button></StepButtons>
    </Step>
    <Step $h={273}>
      <StepSide><StepNumber>3</StepNumber></StepSide>
    </Step>
    <Step $h={118}>
      <StepSide>
        <StepNumber>4</StepNumber>
        <StepFour>
          <Copyright>저작권 정보:<input type="text" /></Copyright>
          <IccLabel><input type="checkbox" defaultChecked />ICC 프로필 포함(D)</IccLabel>
        </StepFour>
      </StepSide>
    </Step>
  </Processor>
);

/* ---------- folder dialog ---------- */

const Dialog = styled.section`
  position: absolute;
  z-index: 3;
  top: 204px;
  left: 50%;
  width: 477px;
  margin-left: -239px;
  border: 1px solid #c38160;
  background: #f0f0f0;
  color: #000;
  font-size: 16px;
  line-height: 20px;
  box-shadow: 0 5px 18px rgba(0, 0, 0, 0.45);
`;

const DialogTitle = styled.div`
  display: flex;
  align-items: center;
  justify-content: space-between;
  height: 37px;
  padding: 0 14px 2px 9px;
  background: #c38160;
`;

const DialogBody = styled.div`
  padding: 17px 21px 13px 23px;
`;

const Tree = styled.div`
  display: flex;
  height: 228px;
  margin-top: 51px;
  border: 1px solid #646464;
  background: #fff;
`;

const TreeRows = styled.ul`
  flex: 1;
  margin: 0;
  padding: 0;
  list-style: none;
`;

const TreeRow = styled.li`
  display: flex;
  align-items: center;
  height: 25px;
  padding-left: ${p => (p.$deep ? 49 : 3)}px;
`;

const Expander = styled.span`
  display: flex;
  justify-content: center;
  width: 12px;
  margin-right: 6px;
  color: #a6a6a6;
`;

const TreeLabel = styled.span`
  display: flex;
  align-items: center;
  gap: 6px;
  height: 25px;
  padding: 0 4px 0 3px;
  background: ${p => (p.$on ? '#cce8ff' : 'transparent')};

  span {
    padding-bottom: 3px;
  }
`;

const ScrollBar = styled.div`
  display: flex;
  flex-direction: column;
  align-items: center;
  width: 19px;
  padding: 6px 0;
  background: #f0f0f0;
  color: #555;
`;

const Thumb = styled.div`
  width: 19px;
  height: 52px;
  margin: auto 0 5px;
  background: #cdcdcd;
`;

const FolderField = styled.label`
  display: flex;
  align-items: center;
  justify-content: space-between;
  margin-top: 19px;

  span {
    padding-top: 4px;
    font-size: 15px;
  }

  input {
    width: 353px;
    height: 35px;
    padding: 0 3px 9px;
    border: 1px solid #7a7a7a;
    background: #fff;
  }
`;

const DialogButtons = styled.div`
  display: flex;
  gap: 10px;
  margin-top: 29px;
  padding-left: 1px;
`;

const DialogButton = styled.button`
  width: ${p => p.$w || 111}px;
  height: 38px;
  margin-right: ${p => (p.$w ? 'auto' : 0)};
  border: ${p => (p.$primary ? '2px solid #0078d7' : '1px solid #adadad')};
  background: #e1e1e1;
`;

const GripCorner = styled.div`
  position: absolute;
  right: 3px;
  bottom: 3px;
`;

const DialogGrip = () => (
  <GripCorner>
    <svg width="11" height="11" viewBox="0 0 11 11">
      <path d="M8 0h3v3H8zM4 4h3v3H4zM8 4h3v3H8zM0 8h3v3H0zM4 8h3v3H4zM8 8h3v3H8z" fill="#bbb" />
    </svg>
  </GripCorner>
);

const FolderIcon = () => (
  <svg width="18" height="18" viewBox="0 0 18 18">
    <path d="M3 0h10v11l1 1v4H3z" fill="#f7d474" />
    <path d="M2 0l6 2v12l-4 1v3l-2-1z" fill="#ffe69b" />
  </svg>
);

const LibraryIcon = ({ w = 18 }) => (
  <svg width={w} height={w} viewBox="0 0 28 28">
    <path d="M1 3c0-2 1-2 2-2h9l3 4H1z" fill="#e3a008" />
    <path d="M1 6h13l2-2h12v20H1z" fill="#ffd25e" />
    <path d="M6 26V16q0-2 2-2h14q2 0 2 2v10h-5v-6h-8v6z" fill="#3a93db" />
  </svg>
);

const NetworkIcon = () => (
  <svg width="18" height="20" viewBox="0 0 18 20">
    <circle cx="12" cy="7" r="6" fill="#4f8aa8" />
    <path d="M8 3l5-1-1 4zM14 7l3-1-1 5z" fill="#b4dbe6" />
    <path d="M0 6l12 3v8L0 13z" fill="#2d9cea" />
    <path d="M1 7l10 3v3z" fill="#64c4ff" />
    <path d="M5 15l4 1v2l-2 1z" fill="#a9bac5" />
  </svg>
);

const ControlIcon = () => (
  <svg width="18" height="16" viewBox="0 0 18 16">
    <path d="M0 0h18v16H0z" fill="#1378bd" />
    <path d="M1 1h16v13H1z" fill="#63c6f8" />
    <circle cx="6" cy="6" r="3" fill="#fff" />
    <path d="M6 3v3h3a3 3 0 00-3-3z" fill="#e5a020" />
    <path d="M11 3h2v2h-2zM14 3h2v2h-2zM11 6h2v2h-2zM14 6h2v2h-2zM11 9h2v1h-2zM14 9h2v1h-2zM3 12h5v1H3z" fill="#fff" />
  </svg>
);

const BinIcon = () => (
  <svg width="18" height="20" viewBox="0 0 18 20">
    <path d="M1 4l6-4 8 2 2 3-2 13-5 2-6-2z" fill="#dde1e4" />
    <path d="M11 6l6-2-2 14-5 2z" fill="#b9c0c4" />
    <circle cx="6" cy="11" r="2" fill="none" stroke="#1979ca" strokeWidth="2" strokeDasharray="3 1" />
  </svg>
);

const treeItems = [
  { text: '200518어머뿔태현', deep: true, open: true, icon: FolderIcon },
  { text: '200606 스춤동빠퓨', deep: true, open: true, icon: FolderIcon },
  { text: '라이브러리', open: true, icon: LibraryIcon },
  { text: '네트워크', open: true, icon: NetworkIcon },
  { text: '제어판', open: true, icon: ControlIcon },
  { text: '휴지통', icon: BinIcon },
  { text: 'c', icon: FolderIcon, on: true },
  { text: '기록', open: true, icon: FolderIcon },
  { text: '새 폴더', icon: FolderIcon },
];

const FolderDialog = () => (
  <Dialog role="dialog" aria-label="폴더 선택">
    <DialogTitle>
      폴더 선택
      <IconButton $w={13} $color="#000" aria-label="닫기"><Icon name="close" w={15} /></IconButton>
    </DialogTitle>
    <DialogBody>
      소스 폴더 선택
      <Tree>
        <TreeRows>
          {treeItems.map(({ text, deep, open, on, icon: Glyph }) => (
            <TreeRow key={text} $deep={deep}>
              <Expander>{open && <Icon name="chevron" w={12} />}</Expander>
              <TreeLabel $on={on}><Glyph /><span>{text}</span></TreeLabel>
            </TreeRow>
          ))}
        </TreeRows>
        <ScrollBar>
          <Icon name="chevronUp" w={10} />
          <Thumb />
          <Icon name="chevronDown" w={10} />
        </ScrollBar>
      </Tree>
      <FolderField><span>폴더(F):</span><input type="text" defaultValue="c" /></FolderField>
      <DialogButtons>
        <DialogButton $w={156}>새 폴더 만들기(M)</DialogButton>
        <DialogButton $primary>확인(O)</DialogButton>
        <DialogButton>취소(C)</DialogButton>
      </DialogButtons>
    </DialogBody>
    <DialogGrip />
  </Dialog>
);

/* ---------- taskbar ---------- */

const TaskBar = styled.footer`
  display: flex;
  flex: none;
  height: 50px;
  background: linear-gradient(90deg, #e4d8e2, #e5d8d8 30%, #ead9d2 50%, #ebdcd4 75%, #ecdcdb 92%, #e6dccb);
  color: #111;
`;

const TaskButton = styled.button`
  display: flex;
  align-items: center;
  justify-content: center;
  width: ${p => p.$w || 62}px;
  height: 50px;
  color: #000;
  background: ${p => (p.$active ? '#f6eeec' : 'transparent')};

  &::after {
    content: "";
    position: absolute;
    bottom: 0;
    width: ${p => (p.$active ? 62 : 52)}px;
    height: 3px;
    background: ${p => (p.$open ? '#c38160' : 'transparent')};
  }
`;

const SearchBox = styled.label`
  display: flex;
  align-items: center;
  gap: 15px;
  width: 430px;
  padding-left: 13px;
  border: 1px solid #ccc;
  background: #fff;

  input {
    flex: 1;
    min-width: 0;
    padding-bottom: 4px;
    font-size: 21px;
    line-height: 28px;
  }

  input::placeholder {
    color: #2b2b2b;
    opacity: 1;
  }
`;

const Tray = styled.div`
  display: flex;
  align-items: center;
  gap: 14px;
  margin-left: auto;
  padding-right: 15px;
`;

const ImeMode = styled.span`
  margin-right: 5px;
  font: 24px/30px "Open Sans", sans-serif;
`;

const ImeLang = styled.span`
  width: 20px;
  height: 20px;
  border: 1px solid #555;
  background: #fff;
  font-size: 15px;
  line-height: 17px;
  text-align: center;
`;

const Clock = styled.div`
  width: 92px;
  padding-bottom: 2px;
  text-align: center;
  font-size: 15px;
  line-height: 23px;
`;

const Notice = styled.div`
  position: relative;
  width: 30px;
  height: 30px;

  span {
    position: absolute;
    right: 0;
    bottom: 0;
    width: 21px;
    height: 21px;
    border: 1px solid #777;
    border-radius: 50%;
    background: #d3cfcf;
    text-align: center;
    font-size: 14px;
    line-height: 18px;
    font-weight: bold;
  }
`;

const DesktopEdge = styled.div`
  width: 6px;
  border-left: 1px solid #aaa3a0;
`;

const SnipIcon = () => (
  <svg width="30" height="30" viewBox="0 0 30 30">
    <ellipse cx="14" cy="9" rx="12" ry="7" transform="rotate(-20 14 9)" fill="#f5eeee" stroke="#c33c3c" strokeWidth="1.500" />
    <path d="M9 4l9 16M26 9L12 18" stroke="#aab3bb" strokeWidth="2" />
    <ellipse cx="10" cy="20" rx="4" ry="3" fill="none" stroke="#2b85c8" strokeWidth="2" />
    <ellipse cx="20" cy="24" rx="3" ry="4" fill="none" stroke="#2b85c8" strokeWidth="2" />
    <path d="M14 18l6 2" stroke="#2b85c8" strokeWidth="2" />
  </svg>
);

const ChromeIcon = () => (
  <svg width="28" height="28" viewBox="0 0 28 28">
    <circle cx="14" cy="14" r="13.500" fill="#fbc116" />
    <path d="M2 8a13.500 13.500 0 0124 0H14a6 6 0 00-5 9z" fill="#d6453a" />
    <path d="M2 8l7 10a6 6 0 008 1l-4 8.500A13.500 13.500 0 012 8z" fill="#3a9e4f" />
    <circle cx="14" cy="14" r="6.500" fill="#fff" />
    <circle cx="14" cy="14" r="5" fill="#4583ee" />
  </svg>
);

const FirefoxIcon = () => (
  <svg width="28" height="30" viewBox="0 0 28 30">
    <path d="M17 0c6 4 11 10 10 17a13 13 0 01-26 1C0 12 2 8 4 5l3 4c3-2 6-2 8 0 1-4 0-6 2-9z" fill="#ff9a20" />
    <path d="M1 13c2 9 10 12 18 9 4-2 5-4 7-4-1 7-6 11-12 11C6 29 0 23 1 13z" fill="#f23a5c" />
    <path d="M17 0c6 4 11 10 10 17-1-5-5-8-10-10z" fill="#ffdb35" />
    <circle cx="14" cy="16" r="6.500" fill="#7046d5" />
    <path d="M6 11c4-1 6 1 9 2-2 2-5 1-6 4-2-1-3-3-3-6z" fill="#ffb62c" />
  </svg>
);

const ExplorerIcon = () => (
  <svg width="30" height="30" viewBox="0 0 30 30">
    <path fillRule="evenodd" d="M27 17H10c1 6 9 6 11 3h5c-5 11-21 9-21-4C5 2 27 0 27 17zM10 13h12c-1-5-11-5-12 0z" fill="#4cc0ec" stroke="#2387bd" />
    <path d="M4 26C-2 30 2 15 13 7 22 0 29 0 28 6" fill="none" stroke="#f3be2c" strokeWidth="2.500" />
  </svg>
);

const WordIcon = () => (
  <svg width="30" height="28" viewBox="0 0 30 28">
    <path d="M7 1h22v26H7z" fill="#2b7cd3" />
    <path d="M7 1h22v7H7z" fill="#41a5ee" />
    <path d="M7 14h22v7H7z" fill="#185abd" />
    <path d="M7 21h22v6H7z" fill="#103f91" />
    <path d="M0 6h16v16H0z" fill="#185abd" />
    <text x="8" y="18" textAnchor="middle" fontFamily="Open Sans, sans-serif" fontWeight="bold" fontSize="11" fill="#fff">W</text>
  </svg>
);

const PsIcon = () => (
  <svg width="28" height="28" viewBox="0 0 28 28">
    <rect x="1" y="1" width="26" height="26" fill="#241c5c" stroke="#7aa8dc" strokeWidth="2" />
    <text x="14" y="18" textAnchor="middle" fontFamily="Open Sans, sans-serif" fontWeight="bold" fontSize="14" fill="#a5c8f4">Ps</text>
  </svg>
);

const StartIcon = () => (
  <svg width="20" height="20" viewBox="0 0 20 20">
    <path d="M0 3l8-1v8H0zM9 2l11-2v10H9zM0 11h8v8l-8-1zM9 11h11v9L9 19z" fill="#000" />
  </svg>
);

const TaskViewIcon = () => (
  <svg width="20" height="20" viewBox="0 0 20 20" fill="none" stroke="#000">
    <path d="M.5 1v3.500h12V1M.5 6.500h12v8H.5zM.5 20v-3.500h12V20M18.500 1v4M18.500 10v9" />
    <path d="M17 6h3v3h-3z" fill="#000" stroke="none" />
  </svg>
);

const Taskbar = () => (
  <TaskBar>
    <TaskButton $w={61} aria-label="시작"><StartIcon /></TaskButton>
    <SearchBox>
      <svg width="20" height="20" viewBox="0 0 20 20" fill="none" stroke="#222" strokeWidth="1.500">
        <circle cx="12" cy="7" r="6.500" /><path d="M8 12l-8 8" />
      </svg>
      <input type="text" placeholder="검색하려면 여기에 입력하십시오." aria-label="검색" />
    </SearchBox>
    <TaskButton aria-label="작업 보기"><TaskViewIcon /></TaskButton>
    <TaskButton aria-label="파일 탐색기"><LibraryIcon w={28} /></TaskButton>
    <TaskButton aria-label="캡처 도구"><SnipIcon /></TaskButton>
    <TaskButton aria-label="Chrome"><ChromeIcon /></TaskButton>
    <TaskButton aria-label="Firefox"><FirefoxIcon /></TaskButton>
    <TaskButton aria-label="Internet Explorer"><ExplorerIcon /></TaskButton>
    <TaskButton $open aria-label="Word"><WordIcon /></TaskButton>
    <TaskButton $open $active aria-label="Photoshop"><PsIcon /></TaskButton>
    <Tray>
      <svg width="17" height="10" viewBox="0 0 17 10" fill="none" stroke="#111" strokeWidth="1.500"><path d="M1 9l7-8 8 8" /></svg>
      <svg width="16" height="16" viewBox="0 0 16 16" fill="none" stroke="#222" strokeWidth="1.300">
        <path d="M1 15A14 14 0 0115 1M5 15A10 10 0 0115 5M9 15a6 6 0 016-6" /><circle cx="14" cy="14" r="1.500" fill="#222" stroke="none" />
      </svg>
      <ImeMode>A</ImeMode>
      <ImeLang>한</ImeLang>
      <Clock>오전 1:47<br />2020-07-19</Clock>
      <Notice>
        <svg width="20" height="20" viewBox="0 0 20 20">
          <path d="M0 1h20v15H12v4l-4-4H0z" fill="#000" />
          <path d="M4 5.500h12M4 8.500h12M4 11.500h8" stroke="#fff" />
        </svg>
        <span>1</span>
      </Notice>
    </Tray>
    <DesktopEdge />
  </TaskBar>
);

/* ---------- page ---------- */

const AntiLabel = styled.label`
  width: 88px;
  color: #999;
`;

const FeatherLabel = styled.label`
  width: 28px;
`;

const StyleLabel = styled.span`
  width: 41px;
  color: #eee;
`;

const App = () => {
  return (
    <Screen>
      <GlobalStyle />
      <MenuBar>
        <Logo>Ps</Logo>
        <Menus>
          {menuNames.map(name => <MenuItem key={name}>{name}</MenuItem>)}
        </Menus>
        <Spacer />
        <WindowButtons>
          <button aria-label="최소화"><svg width="10" height="4"><rect width="10" height="4" fill="#fff" /></svg></button>
          <button aria-label="이전 크기로">
            <svg width="12" height="11" viewBox="0 0 12 11" fill="none" stroke="#fff" strokeWidth="2"><path d="M4 3V1h7v6H8M1 4h6v6H1z" /></svg>
          </button>
          <button aria-label="닫기"><Icon name="closeBold" w={11} /></button>
        </WindowButtons>
      </MenuBar>
      <OptionsBar>
        <OptionGroup $w={56} $gap={8}>
          <SideGrip />
          <IconButton $w={26} $color="#ccc" aria-label="사각형 선택 윤곽 도구"><Icon name="marquee" w={17} /></IconButton>
          <Icon name="caret" w={6} />
        </OptionGroup>
        <OptionGroup $w={111} $pad={7} $gap={2}>
          {['selNew', 'selAdd', 'selSub', 'selCross'].map((name, i) => (
            <ModeButton key={name} $on={i === 0} aria-label={name}><Icon name={name} w={16} /></ModeButton>
          ))}
        </OptionGroup>
        <OptionGroup $w={227} $pad={11} $gap={6}>
          <FeatherLabel htmlFor="feather">페더:</FeatherLabel>
          <Field id="feather" $w={63} defaultValue="0 px" />
          <Spacer />
          <DarkCheck id="anti" type="checkbox" disabled />
          <AntiLabel htmlFor="anti">앤티 앨리어스</AntiLabel>
        </OptionGroup>
        <OptionGroup $w={348} $pad={13} $end={8} $gap={5} $dim>
          <StyleLabel>스타일:</StyleLabel>
          <Select label="스타일" value="표준" $w={85} />
          <Spacer />
          <label htmlFor="width">폭:</label>
          <Field id="width" $w={40} disabled />
          <Spacer />
          <Icon name="arrows" w={14} />
          <Spacer />
          <label htmlFor="height">높이:</label>
          <Field id="height" $w={40} disabled />
        </OptionGroup>
        <RefineButton>가장자리 다듬기 ...</RefineButton>
        <Spacer />
        <Select label="작업 영역" value="필수" $w={131} />
      </OptionsBar>
      <Workspace>
        <Toolbar />
        <Spacer />
        <HistoryWindow>
          <TopStrip />
          <TabStrip names={['작업 내역', '액션']} collapse />
          <Well $h={96} />
          <PanelFoot>
            <Icon name="newDoc" w={14} />
            <Icon name="camera" w={14} h={13} />
            <Icon name="trash" w={12} />
            <CornerGrip />
          </PanelFoot>
          <BottomStrip><Grip /></BottomStrip>
        </HistoryWindow>
        <RightDock />
        <PropertiesWindow>
          <WindowHead />
          <TabStrip names={['속성']} />
          <Message>속성 없음</Message>
          <Well $h={288} $bg="#535353" />
          <PanelFoot>
            <Icon name="trash" w={12} />
            <CornerGrip />
          </PanelFoot>
          <BottomStrip><Grip /></BottomStrip>
        </PropertiesWindow>
        <Timeline />
        <ImageProcessor />
        <FolderDialog />
      </Workspace>
      <Taskbar />
    </Screen>
  );
};

export default App;
